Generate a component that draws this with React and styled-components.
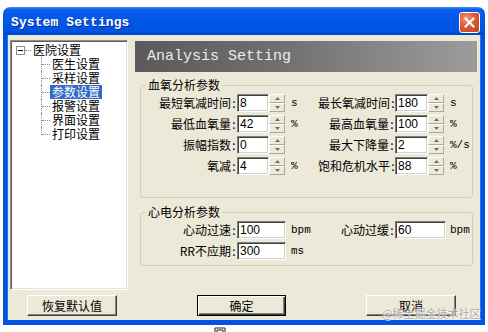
import React from 'react';
import styled, { createGlobalStyle } from 'styled-components';

const CJK = `"Noto Sans CJK SC", "Liberation Sans", sans-serif`;

const GlobalStyle = createGlobalStyle`
  html, body { margin: 0; padding: 0; background: #fff; }
  body { width: 488px; height: 332px; overflow: hidden; font-family: ${CJK}; }
  * { box-sizing: border-box; }
`;

const Page = styled.div`
  position: relative;
  width: 488px;
  height: 332px;
  padding: 7px 0 0 3px;
`;

const Window = styled.div`
  width: 482px;
  display: flex;
  flex-direction: column;
`;

const TitleBar = styled.div`
  height: 28px;
  display: flex;
  align-items: center;
  justify-content: space-between;
  padding: 0 5px 0 8px;
  border-radius: 7px 7px 0 0;
  background: linear-gradient(180deg, #3d8ffd 0%, #0b5fec 9%, #0257e8 45%, #0054e3 85%, #0045cc 100%);
`;

const TitleText = styled.span`
  font-family: "Liberation Mono", monospace;
  font-weight: bold;
  font-size: 13px;
  color: #fff;
  padding-top: 3px;
  text-shadow: 1px 1px 0 #0a2a9a;
  letter-spacing: 0.1px;
`;

const CloseButton = styled.div`
  width: 21px;
  height: 21px;
  margin-top: 3px;
  border: 1px solid #fff;
  border-radius: 3px;
  background: radial-gradient(circle at 35% 30%, #ef9a7c 0%, #dd5a34 45%, #c2401c 100%);
  display: flex;
  align-items: center;
  justify-content: center;
`;

const Body = styled.div`
  display: grid;
  grid-template-columns: 118px 342px;
  grid-template-rows: 250px 21px;
  column-gap: 7px;
  row-gap: 5px;
  padding: 5px 4px 4px 3px;
  background: #ece9d8;
  border: 4px solid #0054e3;
  border-top: none;
  border-bottom-width: 5px;
  box-shadow: inset 1px 0 #2a6ff0, inset -1px 0 #2a6ff0;
`;

const TreeBox = styled.div`
  background: #fff;
  border: 1px solid;
  border-color: #8e8f8f #fff #fff #8e8f8f;
  box-shadow: inset 1px 1px #5e5e5e, inset -1px -1px #e4e2d6;
  padding: 2px 0 0 5px;
`;

const TreeRow = styled.div`
  height: 14px;
  display: flex;
  align-items: flex-start;
  font-size: 12px;
  line-height: 14px;
  color: #000;
`;

const Expander = styled.div`
  width: 9px;
  height: 9px;
  margin-top: 3px;
  border: 1px solid #8c8c8c;
  background: #fff;
  display: flex;
  align-items: center;
  justify-content: center;
  &::after {
    content: '';
    width: 5px;
    height: 1px;
    background: #000;
  }
`;

const HStub = styled.div`
  width: ${p => p.$w}px;
  height: 14px;
  position: relative;
  &::before {
    content: '';
    position: absolute;
    left: 0;
    right: 0;
    top: 7px;
    border-top: 1px dotted #8c8c8c;
  }
`;

const Branch = styled.div`
  width: 9px;
  margin-left: 25px;
  position: relative;
  border-left: 1px dotted #8c8c8c;
  height: ${p => (p.$last ? '8px' : '14px')};
  &::before {
    content: '';
    position: absolute;
    left: 0;
    right: 0;
    top: 7px;
    border-top: 1px dotted #8c8c8c;
  }
`;

const TreeLabel = styled.span`
  padding: 0 2px;
  background: ${p => (p.$selected ? '#316ac5' : 'transparent')};
  color: ${p => (p.$selected ? '#fff' : '#000')};
  white-space: nowrap;
`;

const Main = styled.div`
  display: flex;
  flex-direction: column;
  min-width: 0;
`;

const Header = styled.div`
  height: 31px;
  margin-top: 1px;
  display: flex;
  align-items: center;
  padding-left: 12px;
  background: linear-gradient(90deg, #5a5a5a 0%, #6e6e6e 40%, #9c9c9c 100%);
  font-family: "Liberation Mono", monospace;
  font-size: 15px;
  color: #ececec;
`;

const Group = styled.fieldset`
  margin: ${p => p.$mt}px 4px 0 5px;
  padding: 0 0 ${p => p.$pb}px 0;
  border: 1px solid #d0d0bf;
  border-radius: 3px;
  min-width: 0;
`;

const Legend = styled.legend`
  font-size: 12px;
  line-height: 14px;
  padding: 0 2px;
  margin-left: 5px;
  color: #000;
`;

const FieldGrid = styled.div`
  display: grid;
  grid-template-columns: 96px 48px 33px 77px 49px 1fr;
  grid-auto-rows: 21px;
  align-items: center;
`;

const Label = styled.div`
  grid-column: ${p => p.$col};
  text-align: right;
  white-space: nowrap;
  font-size: 12px;
  color: #000;
`;

const Colon = styled.span`
  display: inline-block;
  width: 6px;
  text-align: center;
`;

const Field = styled.div`
  grid-column: ${p => p.$col};
  display: flex;
  height: 18px;
  width: ${p => p.$w || 'auto'};
`;

const Input = styled.div`
  flex: 1;
  height: 18px;
  background: #fff;
  border: 1px solid;
  border-color: #7f7f7f #fff #fff #7f7f7f;
  box-shadow: inset 1px 1px #404040, inset -1px -1px #d4d0c8;
  font-family: "Liberation Sans", sans-serif;
  font-size: 12px;
  line-height: 16px;
  padding-left: 2px;
  color: #000;
`;

const Spinner = styled.div`
  width: 16px;
  display: flex;
  flex-direction: column;
`;

const SpinHalf = styled.div`
  flex: 1;
  background: #ece9d8;
  border: 1px solid;
  border-color: #fff #a8a89c #a8a89c #fff;
  display: flex;
  align-items: center;
  justify-content: center;
`;

const Unit = styled.div`
  grid-column: ${p => p.$col};
  padding-left: 6px;
  font-family: "Liberation Mono", monospace;
  font-size: 11px;
  color: #000;
  white-space: nowrap;
`;

const LeftButtons = styled.div`
  display: flex;
  padding-left: 17px;
`;

const RightButtons = styled.div`
  display: flex;
  gap: 80px;
  padding-left: 62px;
`;

const Button = styled.div`
  width: ${p => p.$w}px;
  height: 21px;
  display: flex;
  align-items: center;
  justify-content: center;
  font-size: 12px;
  color: #000;
  background: #ece9d8;
  border: 1px solid;
  border-color: ${p => (p.$default ? '#000' : '#fff #404040 #404040 #fff')};
  box-shadow: ${p =>
    p.$default
      ? 'inset 1px 1px #fff, inset -1px -1px #404040, inset -2px -2px #808080'
      : 'inset -1px -1px #808080'};
`;

const Watermark = styled.div`
  position: absolute;
  left: 382px;
  top: 305px;
  font-size: 11px;
  color: rgba(140, 140, 140, 0.75);
  text-shadow: 0 0 1px #fff, 1px 1px 0 rgba(255,255,255,0.6);
  white-space: nowrap;
  font-family: ${CJK};
`;

const Tiny = styled.div`
  margin: 2px 0 0 211px;
  height: 6px;
  display: flex;
`;

const Arrow = ({ up }) => (
  <svg width="5" height="3" viewBox="0 0 5 3">
    <path d={up ? 'M2.5 0 L5 3 L0 3 Z' : 'M0 0 L5 0 L2.5 3 Z'} fill="#6b6b6b" />
  </svg>
);

const SpinField = ({ value, col }) => (
  <Field $col={col}>
    <Input>{value}</Input>
    <Spinner>
      <SpinHalf><Arrow up /></SpinHalf>
      <SpinHalf><Arrow /></SpinHalf>
    </Spinner>
  </Field>
);

const LabelText = ({ text, col }) => (
  <Label $col={col}>
    {text}
    <Colon>:</Colon>
  </Label>
);

const treeChildren = ['医生设置', '采样设置', '参数设置', '报警设置', '界面设置', '打印设置'];

const oxygenRows = [
  { l: '最短氧减时间', lv: '8', lu: 's', r: '最长氧减时间', rv: '180', ru: 's' },
  { l: '最低血氧量', lv: '42', lu: '%', r: '最高血氧量', rv: '100', ru: '%' },
  { l: '振幅指数', lv: '0', lu: '', r: '最大下降量', rv: '2', ru: '%/s' },
  { l: '氧减', lv: '4', lu: '%', r: '饱和危机水平', rv: '88', ru: '%' },
];

export default function App() {
  return (
    <>
      <GlobalStyle />
      <Page>
        <Window>
          <TitleBar>
            <TitleText>System Settings</TitleText>
            <CloseButton>
              <svg width="11" height="11" viewBox="0 0 11 11">
                <path d="M1.5 1.5 L9.5 9.5 M9.5 1.5 L1.5 9.5" stroke="#fff" strokeWidth="2" strokeLinecap="square" />
              </svg>
            </CloseButton>
          </TitleBar>
          <Body>
            <TreeBox>
              <TreeRow>
                <Expander />
                <HStub $w={6} />
                <TreeLabel>医院设置</TreeLabel>
              </TreeRow>
              {treeChildren.map((c, i) => (
                <TreeRow key={c}>
                  <Branch $last={i === treeChildren.length - 1} />
                  <TreeLabel $selected={c === '参数设置'}>{c}</TreeLabel>
                </TreeRow>
              ))}
            </TreeBox>
            <Main>
              <Header>Analysis Setting</Header>
              <Group $mt={6} $pb={21}>
                <Legend>血氧分析参数</Legend>
                <FieldGrid>
                  {oxygenRows.map(r => (
                    <React.Fragment key={r.l}>
                      <LabelText text={r.l} col={1} />
                      <SpinField value={r.lv} col={2} />
                      <Unit $col={3}>{r.lu}</Unit>
                      <LabelText text={r.r} col={4} />
                      <SpinField value={r.rv} col={5} />
                      <Unit $col={6}>{r.ru}</Unit>
                    </React.Fragment>
                  ))}
                </FieldGrid>
              </Group>
              <Group $mt={7} $pb={4}>
                <Legend>心电分析参数</Legend>
                <FieldGrid>
                  <LabelText text="心动过速" col={1} />
                  <Field $col={2} $w="49px"><Input>100</Input></Field>
                  <Unit $col={3}>bpm</Unit>
                  <LabelText text="心动过缓" col={4} />
                  <Field $col={5} $w="51px"><Input>60</Input></Field>
                  <Unit $col={6}>bpm</Unit>
                  <LabelText text="RR不应期" col={1} />
                  <Field $col={2} $w="49px"><Input>300</Input></Field>
                  <Unit $col={3}>ms</Unit>
                </FieldGrid>
              </Group>
            </Main>
            <LeftButtons>
              <Button $w={90}>恢复默认值</Button>
            </LeftButtons>
            <RightButtons>
              <Button $w={89} $default>确定</Button>
              <Button $w={90}>取消</Button>
            </RightButtons>
          </Body>
        </Window>
        <Tiny>
          <svg width="12" height="6" viewBox="0 0 12 6">
            <path d="M1 6 V1 H11 V6 M3 6 V3 H9 V6" stroke="#222" strokeWidth="1" fill="none" />
          </svg>
        </Tiny>
        <Watermark>@稀土掘金技术社区</Watermark>
      </Page>
    </>
  );
}
